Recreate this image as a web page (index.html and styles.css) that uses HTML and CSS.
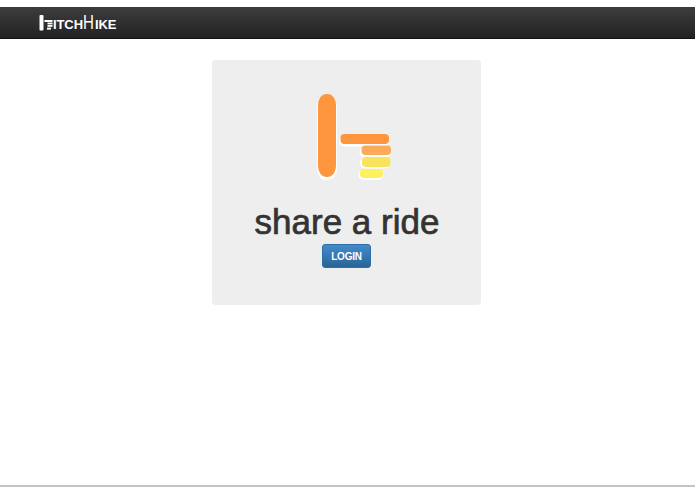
FILE: index.html
```html
<!DOCTYPE html>
<html lang="en">
<head>
<meta charset="utf-8">
<title>Hitchhike</title>
<link rel="stylesheet" href="styles.css">
</head>
<body>
<header class="navbar">
  <a class="brand" href="#">
    <svg class="brand-mark" width="14" height="16" viewBox="0 0 14 16" aria-hidden="true">
      <rect x="0.5" y="0" width="4" height="15.5" rx="1" fill="#fff"/>
      <rect x="5.5" y="5" width="8" height="2" fill="#fff"/>
      <rect x="8.5" y="7.6" width="5" height="1.8" fill="#fff"/>
      <rect x="8.5" y="10" width="5" height="1.8" fill="#fff"/>
      <rect x="8" y="12.6" width="4" height="2" fill="#fff"/>
    </svg>
    <span class="brand-text">ITCH<span class="brand-thin">H</span>IKE</span>
  </a>
</header>
<main class="main">
  <section class="card">
    <svg class="logo" width="75" height="88" viewBox="0 0 75 88" aria-hidden="true">
      <g fill="#fff">
        <rect x="0" y="1" width="20" height="85" rx="8" ry="12"/>
        <rect x="22" y="42" width="50" height="10.5" rx="5"/>
        <rect x="42.5" y="53" width="31" height="10.5" rx="5"/>
        <rect x="43" y="64" width="30" height="10.5" rx="5"/>
        <rect x="41.5" y="76" width="25" height="10" rx="5"/>
      </g>
      <rect class="o1" x="1" y="0" width="18" height="83" rx="8" ry="11"/>
      <rect class="o1" x="23.5" y="40" width="48.5" height="10" rx="4"/>
      <rect class="o2" x="44.5" y="51.5" width="29.5" height="9.5" rx="4"/>
      <rect class="y1" x="45" y="63" width="28.5" height="10" rx="4"/>
      <rect class="y2" x="43" y="75" width="23" height="9" rx="4"/>
    </svg>
    <h1 class="title">share a ride</h1>
    <a class="btn" href="#">LOGIN</a>
  </section>
</main>
<footer class="footer"></footer>
</body>
</html>
```
FILE: styles.css
```css
* { box-sizing: border-box; }
html, body { height: 100%; }
body {
  margin: 0;
  padding-top: 7px;
  display: flex;
  flex-direction: column;
  background: #fff;
  font-family: "Liberation Sans", Arial, sans-serif;
  color: #333;
}
.navbar {
  height: 32px;
  flex: none;
  padding-left: 39px;
  display: flex;
  align-items: center;
  background: linear-gradient(#3d3d3d, #222);
  border-bottom: 1px solid #111;
}
.brand {
  display: flex;
  align-items: flex-end;
  gap: 0;
  color: #fff;
  text-decoration: none;
  height: 16px;
}
.brand-mark { display: block; }
.brand-text {
  font-size: 13px;
  font-weight: 700;
  line-height: 13px;
  letter-spacing: -0.1px;
}
.brand-thin {
  display: inline-block;
  width: 12px;
  font-weight: 400;
  font-size: 21px;
  line-height: 13px;
  transform: scaleX(0.72);
  transform-origin: 0 100%;
}
.main {
  flex: 1;
  display: flex;
  justify-content: center;
  align-items: flex-start;
  padding: 21px 2px 0 0;
}
.card {
  width: 269px;
  height: 245px;
  padding-top: 34px;
  display: flex;
  flex-direction: column;
  align-items: center;
  background: #eee;
  border-radius: 4px;
}
.logo { display: block; margin-left: 16px; }
.o1 { fill: #fd963f; }
.o2 { fill: #fdab5a; }
.y1 { fill: #f8e45c; }
.y2 { fill: #fdf15c; }
.title {
  margin: 20px 0 0 1px;
  font-size: 35px;
  font-weight: 400;
  line-height: 40px;
  color: #333;
  -webkit-text-stroke: 0.7px #333;
}
.btn {
  margin-top: 2px;
  width: 49px;
  height: 24px;
  display: flex;
  align-items: center;
  justify-content: center;
  font-size: 10px;
  font-weight: 700;
  letter-spacing: -0.2px;
  color: #fff;
  text-decoration: none;
  background: linear-gradient(#428bca, #2a6496);
  border: 1px solid #2f6ea5;
  border-radius: 3px;
}
.footer {
  flex: none;
  height: 9px;
  border-top: 2px solid #c4c4c4;
}
```
